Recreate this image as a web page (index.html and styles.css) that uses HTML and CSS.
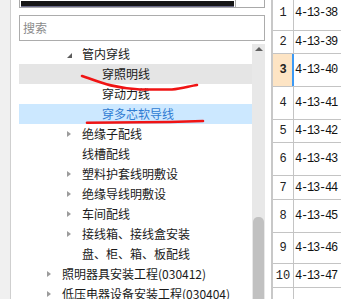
FILE: index.html
```html
<!DOCTYPE html>
<html>
<head>
<meta charset="utf-8">
<link rel="stylesheet" href="styles.css">
</head>
<body>
<div class="app">
  <div class="rail"></div>
  <div class="left">
    <div class="topbox">
      <div class="topfield"><div class="ink"></div></div>
      <div class="topbtn"></div>
    </div>
    <div class="search">搜索</div>
    <div class="treewrap">
      <ul class="tree">
        <li class="node l1"><span class="tog open"></span><span class="lbl">管内穿线</span></li>
        <li class="node l2 sel-gray"><span class="tog"></span><span class="lbl">穿照明线</span></li>
        <li class="node l2"><span class="tog"></span><span class="lbl">穿动力线</span></li>
        <li class="node l2 sel-blue"><span class="tog"></span><span class="lbl">穿多芯软导线</span></li>
        <li class="node l1"><span class="tog closed"></span><span class="lbl">绝缘子配线</span></li>
        <li class="node l1"><span class="tog"></span><span class="lbl">线槽配线</span></li>
        <li class="node l1"><span class="tog closed"></span><span class="lbl">塑料护套线明敷设</span></li>
        <li class="node l1"><span class="tog closed"></span><span class="lbl">绝缘导线明敷设</span></li>
        <li class="node l1"><span class="tog closed"></span><span class="lbl">车间配线</span></li>
        <li class="node l1"><span class="tog closed"></span><span class="lbl">接线箱、接线盒安装</span></li>
        <li class="node l1"><span class="tog"></span><span class="lbl">盘、柜、箱、板配线</span></li>
        <li class="node l0"><span class="tog closed"></span><span class="lbl">照明器具安装工程(030412)</span></li>
        <li class="node l0"><span class="tog closed"></span><span class="lbl">低压电器设备安装工程(030404)</span></li>
      </ul>
      <div class="vscroll"><span class="up"></span><span class="thumb"></span></div>
    </div>
  </div>
  <div class="right">
    <div class="trow first h34"><div class="num">1</div><div class="code">4-13-38</div></div>
    <div class="trow h22"><div class="num">2</div><div class="code">4-13-39</div></div>
    <div class="trow h32"><div class="num cur">3</div><div class="code">4-13-40</div></div>
    <div class="trow h32"><div class="num">4</div><div class="code">4-13-41</div></div>
    <div class="trow h22"><div class="num">5</div><div class="code">4-13-42</div></div>
    <div class="trow h32"><div class="num">6</div><div class="code">4-13-43</div></div>
    <div class="trow h23"><div class="num">7</div><div class="code">4-13-44</div></div>
    <div class="trow h32"><div class="num">8</div><div class="code">4-13-45</div></div>
    <div class="trow h30"><div class="num">9</div><div class="code">4-13-46</div></div>
    <div class="trow h23"><div class="num">10</div><div class="code">4-13-47</div></div>
    <div class="trow h32"><div class="num"></div><div class="code"></div></div>
  </div>
</div>
<svg class="marks" width="341" height="299" viewBox="0 0 341 299">
  <path d="M82,76 C95,80 110,88 140,89.5 L172,89.5 C182,88.5 190,86 197,85" />
  <path d="M87,122.8 L170,122 L203,121" />
</svg>
</body>
</html>
```
FILE: styles.css
```css
html, body {
  margin: 0;
  padding: 0;
}
body {
  width: 341px;
  height: 299px;
  overflow: hidden;
  position: relative;
  background: #ffffff;
  font-family: "Noto Sans CJK SC", "Noto Sans", sans-serif;
  font-size: 12px;
  color: #1a1a1a;
}
.app {
  display: flex;
  height: 299px;
  overflow: hidden;
}
.rail {
  flex: none;
  width: 10px;
  background: #f0f0f0;
  border-right: 1px solid #cfcfcf;
}
.left {
  flex: none;
  width: 246px;
  padding: 0 6px 0 8px;
  display: flex;
  flex-direction: column;
  overflow: hidden;
}
.topbox {
  flex: none;
  height: 7px;
  border: 1px solid #a9a9a9;
  border-top: none;
  display: flex;
}
.topfield {
  width: 213px;
  padding: 0 1px;
  border-right: 1px solid #a9a9a9;
}
.ink {
  height: 5px;
  margin-top: 1px;
  background: #161616;
  border-bottom: 1px solid #6b6b8a;
}
.topbtn {
  flex: 1;
}
.search {
  flex: none;
  margin-top: 7px;
  height: 24px;
  line-height: 24px;
  border: 1px solid #acacac;
  padding-left: 3px;
  color: #8a8a8a;
}
.treewrap {
  margin-top: 3px;
  flex: 1;
  min-height: 0;
  display: flex;
}
.tree {
  list-style: none;
  margin: 0;
  padding: 0;
  width: 233px;
  flex: none;
}
.node {
  height: 20px;
  line-height: 20px;
  display: flex;
  white-space: nowrap;
}
.l0 { padding-left: 27px; }
.l1 { padding-left: 47px; }
.l2 { padding-left: 67px; }
.tog {
  flex: none;
  width: 16px;
  height: 20px;
}
.tog.closed::before {
  content: "";
  display: block;
  width: 0;
  height: 0;
  margin: 7px 0 0 1px;
  border-left: 4px solid #9c9c9c;
  border-top: 3.5px solid transparent;
  border-bottom: 3.5px solid transparent;
}
.tog.open::before {
  content: "";
  display: block;
  width: 0;
  height: 0;
  margin: 9px 0 0 1px;
  border-right: 5px solid #5c5c5c;
  border-top: 5px solid transparent;
}
.sel-gray {
  background: #e5e5e5;
}
.sel-blue {
  background: #cce8ff;
  color: #2f7bd2;
}
.vscroll {
  flex: none;
  width: 13px;
  background: #e8e8e8;
  display: flex;
  flex-direction: column;
  align-items: center;
}
.up {
  flex: none;
  width: 0;
  height: 0;
  margin-top: 3px;
  border-bottom: 4px solid #606060;
  border-left: 4px solid transparent;
  border-right: 4px solid transparent;
}
.thumb {
  flex: none;
  margin-top: auto;
  width: 11px;
  height: 82px;
  background: #c1c1c1;
  border-radius: 5px 5px 0 0;
}
.right {
  flex: 1;
  min-width: 0;
  border-left: 2px solid #c8c8c8;
  display: flex;
  flex-direction: column;
  overflow: hidden;
}
.trow {
  flex: none;
  display: flex;
  border-bottom: 1px solid #c4c4c4;
}
.trow.first { margin-top: -4px; }
.h34 { height: 34px; }
.h32 { height: 32px; }
.h30 { height: 30px; }
.h23 { height: 23px; }
.h22 { height: 22px; }
.num {
  flex: none;
  width: 20px;
  border-right: 1px solid #c4c4c4;
  display: flex;
  align-items: center;
  justify-content: center;
  font-family: "Liberation Mono", monospace;
  font-size: 12px;
  color: #222;
}
.num.cur {
  background: #fde4c4;
  font-weight: bold;
  border-right-color: #3d9af5;
  box-shadow: inset -1px 0 #3d9af5;
}
.code {
  flex: 1;
  padding-left: 1px;
  display: flex;
  align-items: center;
  white-space: nowrap;
  font-family: "Liberation Mono", monospace;
  font-size: 12px;
  letter-spacing: -1.2px;
  color: #111;
}
.marks {
  position: absolute;
  left: 0;
  top: 0;
  pointer-events: none;
}
.marks path {
  fill: none;
  stroke: #f01414;
  stroke-width: 2.6;
  stroke-linecap: round;
  stroke-linejoin: round;
}
```
